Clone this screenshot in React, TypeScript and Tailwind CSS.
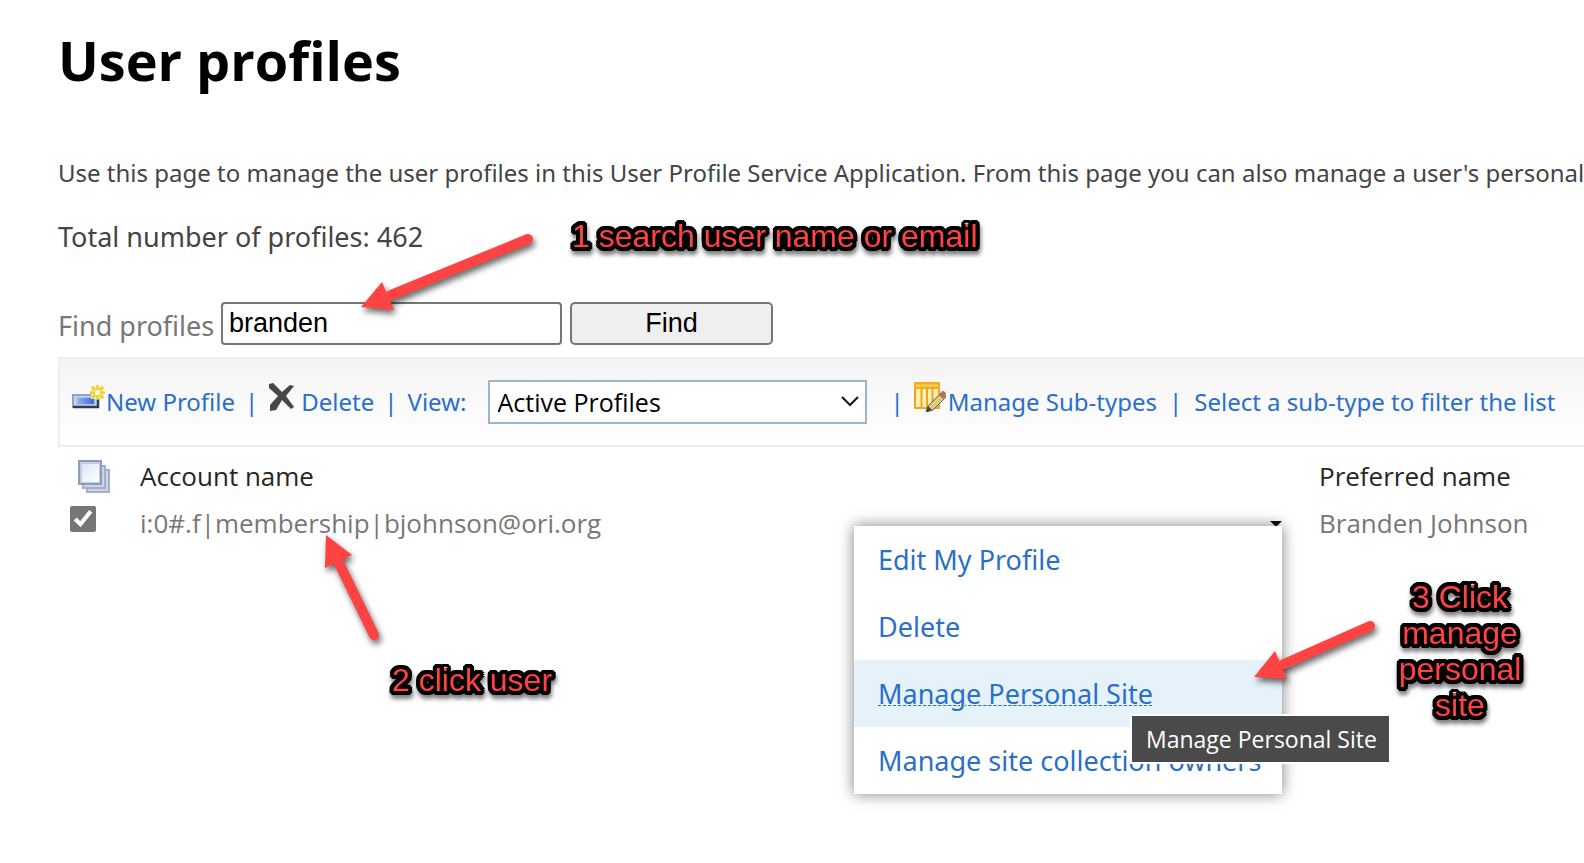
import { useState, type ReactNode } from "react";

const menuItems = [
  "Edit My Profile",
  "Delete",
  "Manage Personal Site",
  "Manage site collection owners",
];

function NewProfileIcon() {
  return (
    <svg width="34" height="24" viewBox="0 0 34 24" className="mb-2.5 shrink-0" aria-hidden="true">
      <defs>
        <linearGradient id="profileFill" x1="0" x2="1">
          <stop offset="0" stopColor="#8fb0f0" />
          <stop offset="1" stopColor="#3f68cf" />
        </linearGradient>
      </defs>
      <rect x="1" y="10" width="25" height="12" fill="#c9d4ea" stroke="#93a3c2" strokeWidth="2" />
      <path d="M1 22H26V13" fill="none" stroke="#303a52" strokeWidth="2.5" />
      <rect x="4" y="12" width="19" height="8" fill="#a9bdec" />
      <rect x="6" y="13" width="16" height="6" fill="url(#profileFill)" />
      <rect x="19" y="1" width="13" height="13" fill="#fae985" />
      <g stroke="#e9c63a" strokeWidth="2">
        <path d="M25.500 0V15M18 7.500H33M20 2L31 13M31 2L20 13" />
      </g>
      <rect x="22.500" y="4.500" width="6" height="6" fill="#fffbd0" stroke="#f2cf35" />
    </svg>
  );
}

function DeleteIcon() {
  return (
    <svg width="27" height="28" viewBox="0 0 27 28" className="mr-1.5 mb-2.5 shrink-0" aria-hidden="true">
      <path d="M1 1L5 0L14 9L22 2L26 3L18 13L26 24L23 26L14 17L8 27L2 28L2 22L10 13L1 5Z" fill="#46474a" />
    </svg>
  );
}

function SubTypesIcon() {
  return (
    <svg width="34" height="30" viewBox="0 0 34 30" className="mb-2.5 shrink-0" aria-hidden="true">
      <rect x="1" y="1" width="24" height="25" fill="#fff0b0" stroke="#eda51a" strokeWidth="2" />
      <rect x="0" y="0" width="26" height="7" fill="#f2ae1e" />
      <path d="M2 3.500H24" stroke="#fbd45a" strokeWidth="2" />
      <path d="M7.500 6V26M13 6V26M18.500 6V26" stroke="#e8a62a" strokeWidth="2" />
      <path d="M27 11L32 15L19 28L12 30L14 24Z" fill="#d6cd80" stroke="#625d50" />
      <path d="M25 13L28 9Q32 9 32 13L29 17Z" fill="#b86a5c" />
      <path d="M12 30L14 24L18 28Z" fill="#444" />
    </svg>
  );
}

function SelectAllIcon() {
  return (
    <svg width="32" height="33" viewBox="0 0 32 33" aria-hidden="true">
      <defs>
        <linearGradient id="sheetFill" x1="0" y1="0" x2="1" y2="1">
          <stop offset="0" stopColor="#dfe5f0" />
          <stop offset="1" stopColor="#fff" />
        </linearGradient>
      </defs>
      <rect x="9" y="10" width="22" height="22" fill="#ccd5e6" stroke="#a4b0c9" strokeWidth="2" />
      <rect x="5" y="6" width="22" height="22" fill="#ccd5e6" stroke="#a4b0c9" strokeWidth="2" />
      <rect x="1" y="1" width="22" height="23" fill="#c4cee1" stroke="#8b9cbf" strokeWidth="2" />
      <rect x="4" y="4" width="17" height="18" fill="url(#sheetFill)" />
    </svg>
  );
}

function Arrow({ className, width, height, shaft, head }: {
  className: string;
  width: number;
  height: number;
  shaft: string;
  head: string;
}) {
  return (
    <svg
      width={width}
      height={height}
      className={`pointer-events-none absolute overflow-visible drop-shadow-[2px_4px_3px_rgba(0,0,0,0.6)] ${className}`}
      aria-hidden="true"
    >
      <path d={shaft} stroke="#ff4242" strokeWidth="10" strokeLinecap="round" />
      <path d={head} fill="#ff4242" />
    </svg>
  );
}

function Callout({ className, children }: { className: string; children: ReactNode }) {
  return (
    <p
      className={`absolute text-center font-['Liberation_Sans'] text-[32px] leading-9 text-[#ff4242] drop-shadow-[1px_4px_2px_rgba(0,0,0,0.5)] [text-shadow:4px_0_#000,-4px_0_#000,0_4px_#000,0_-4px_#000,3px_3px_#000,-3px_3px_#000,3px_-3px_#000,-3px_-3px_#000,4px_2px_#000,-4px_2px_#000,4px_-2px_#000,-4px_-2px_#000,2px_4px_#000,-2px_4px_#000,2px_-4px_#000,-2px_-4px_#000,2px_0_#000,-2px_0_#000] ${className}`}
    >
      {children}
    </p>
  );
}

export default function App() {
  const [query, setQuery] = useState("branden");

  return (
    <main className="relative min-h-screen overflow-hidden bg-white pl-[58px] font-['Noto_Sans',sans-serif] text-[#444]">
      <h1 className="pt-5.5 font-['Open_Sans'] text-[54px] leading-[76px] font-bold text-black">User profiles</h1>

      <p className="mt-[57px] text-2xl leading-9 whitespace-nowrap">
        Use this page to manage the user profiles in this User Profile Service Application. From this page you can also manage a user's personal site.
      </p>
      <p className="mt-7 text-[27px] leading-9">Total number of profiles: 462</p>

      {/* Search */}
      <form className="mt-[47px] flex items-center gap-2" onSubmit={(e) => e.preventDefault()}>
        <label htmlFor="find" className="w-[155px] pt-1 text-[27px] leading-9 whitespace-nowrap text-[#777]">
          Find profiles
        </label>
        <input
          id="find"
          value={query}
          onChange={(e) => setQuery(e.target.value)}
          className="h-[43px] w-[341px] rounded-[4px] border-2 border-[#767676] px-1.5 font-['Liberation_Sans'] text-[27px] text-black"
        />
        <button className="h-[43px] w-[203px] rounded-[5px] border-2 border-[#767676] bg-[#efefef] pb-0.5 font-['Liberation_Sans'] text-[27px] leading-9 text-black">
          Find
        </button>
      </form>

      {/* Toolbar */}
      <div className="mt-3 flex h-[90px] items-center border-2 border-r-0 border-[#eee] bg-linear-to-b from-[#f4f4f4] to-white pl-3 text-2xl whitespace-nowrap text-[#2a6fca]">
        <NewProfileIcon />
        <a href="#new">New Profile</a>
        <span className="mx-2.5">|</span>
        <DeleteIcon />
        <a href="#delete">Delete</a>
        <span className="mx-2.5">|</span>
        <label htmlFor="view" className="w-20">View:</label>
        <div className="relative">
          <select id="view" className="h-11 w-[379px] appearance-none border-2 border-[#9db3c9] bg-white px-2 pt-0.5 font-['Open_Sans'] text-[25px] text-black">
            <option>Active Profiles</option>
          </select>
          <svg width="18" height="11" className="pointer-events-none absolute top-4 right-2" aria-hidden="true">
            <path d="M1 1L9 9L17 1" fill="none" stroke="#111" strokeWidth="2" />
          </svg>
        </div>
        <span className="mr-2.5 ml-6">|</span>
        <SubTypesIcon />
        <a href="#subtypes">Manage Sub-types</a>
        <span className="mx-3">|</span>
        <span>Select a sub-type to filter the list</span>
      </div>

      <table className="mt-1.5 w-full table-fixed text-left font-['Open_Sans'] text-[26px] leading-[47px]">
        <thead>
          <tr className="text-[#262626]">
            <th className="w-[82px] pl-5"><SelectAllIcon /></th>
            <th className="font-normal">Account name</th>
            <th className="w-[265px] font-normal">Preferred name</th>
          </tr>
        </thead>
        <tbody>
          <tr className="text-[#777]">
            <td className="pl-3">
              <input type="checkbox" defaultChecked aria-label="Select Branden Johnson" className="mb-2.5 block size-[26px] accent-[#767676]" />
            </td>
            <td>i:0#.f|membership|bjohnson@ori.org</td>
            <td>Branden Johnson</td>
          </tr>
        </tbody>
      </table>

      {/* Account menu */}
      <svg width="12" height="6" className="absolute top-[521px] left-[1270px]" aria-hidden="true">
        <path d="M0 0H12L6 6Z" fill="#111" />
      </svg>
      <ul className="absolute top-[526px] left-[854px] w-[428px] bg-white text-[27px] leading-[67px] text-[#2a6fca] shadow-[0_0_14px_rgba(0,0,0,0.5)]">
        {menuItems.map((item) => (
          <li key={item} className={item === "Manage Personal Site" ? "bg-[#e6f2fa] underline decoration-dashed decoration-1 underline-offset-1" : ""}>
            <a href="#menu" className="block px-6 whitespace-nowrap">{item}</a>
          </li>
        ))}
      </ul>
      <div className="absolute top-[714px] left-[1130px] border-2 border-r-0 border-white bg-[#4a4a4a] pr-3 pl-3.5 font-['Open_Sans'] text-[23px] leading-[46px] whitespace-nowrap text-white">
        Manage Personal Site
      </div>

      <Arrow className="top-[233px] left-[361px]" width={174} height={78} shaft="M167 6L30 62" head="M0 74L21 49L33 77Z" />
      <Arrow className="top-[535px] left-[326px]" width={54} height={110} shaft="M48 100L13 28" head="M0 0L26 20L-1 33Z" />
      <Arrow className="top-[620px] left-[1254px]" width={122} height={60} shaft="M116 6L30 44" head="M0 57L21 31L33 59Z" />

      <Callout className="top-[218px] left-[572px] whitespace-nowrap">1 search user name or email</Callout>
      <Callout className="top-[662px] left-[392px] whitespace-nowrap">2 click user</Callout>
      <Callout className="top-[579px] left-[1390px] w-[140px]">3 Click manage personal site</Callout>
    </main>
  );
}
